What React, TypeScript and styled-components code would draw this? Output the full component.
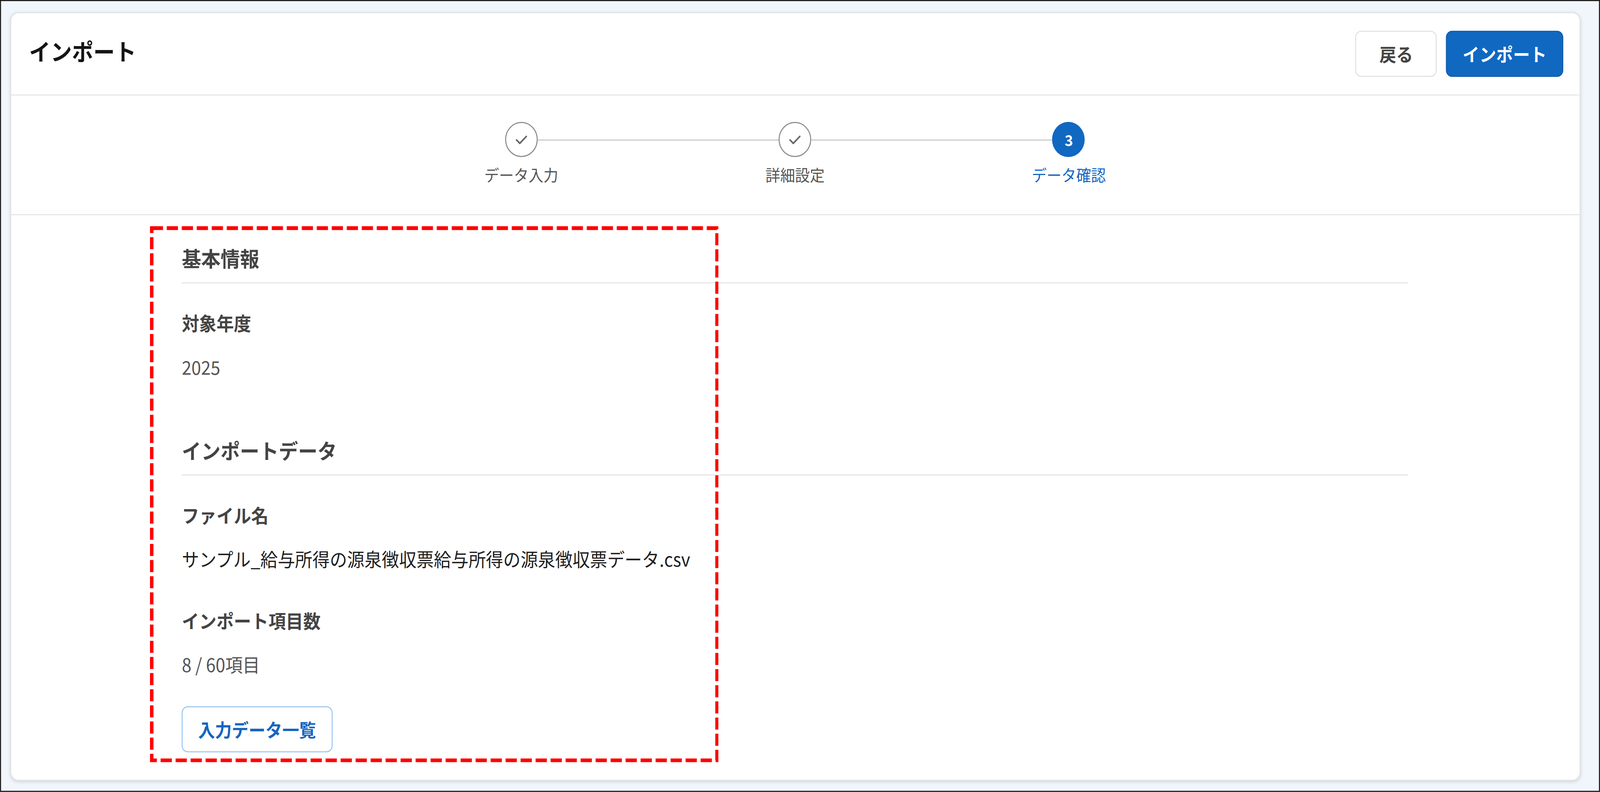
import React, { useEffect, useState } from "react";
import styled, { createGlobalStyle, css } from "styled-components";

const BASE_WIDTH = 1568;
const BASE_HEIGHT = 721.1;

const GlobalStyle = createGlobalStyle`
  html, body {
    margin: 0;
    padding: 0;
    background: #f1f5fc;
  }
  body {
    font-family: "Noto Sans CJK JP", "Noto Sans", sans-serif;
  }
  * {
    box-sizing: border-box;
  }
`;

// fills the browser window, the page inside is stretched to it
const Screen = styled.div`
  width: 100vw;
  height: 100vh;
  overflow: hidden;
  background: #f1f5fc;
`;

// the reference is a 1568px wide screen shot scaled up, the scale is set at runtime
const Page = styled.div`
  position: relative;
  width: 1568px;
  height: 721.1px;
  transform-origin: 0 0;
  border: 1px solid #1b1b1b;
  background: #f1f5fc;
  padding: 10px 18.2px 9.6px 8.5px;
`;

const Card = styled.div`
  height: 100%;
  display: flex;
  flex-direction: column;
  background: #fff;
  border: 1px solid #e2e2e2;
  border-radius: 8px;
  box-shadow: 0 1px 3px rgba(0, 0, 0, 0.12);
  overflow: hidden;
`;

const Header = styled.div`
  display: flex;
  justify-content: space-between;
  align-items: flex-start;
  padding: 16px 16px 16px 18px;
  border-bottom: 1px solid #e6e6e6;
`;

const Title = styled.h1`
  margin: 0;
  font-size: 21px;
  line-height: 36px;
  font-weight: 700;
  color: #151515;
`;

const Actions = styled.div`
  display: flex;
  gap: 9px;
`;

const Button = styled.button<{ $variant: "plain" | "primary" | "outline" }>`
  height: 42px;
  padding: 0 15px;
  border-radius: 6px;
  font-family: inherit;
  font-size: 16.5px;
  font-weight: 700;
  cursor: pointer;
  ${props =>
    props.$variant === "primary"
      ? css`
          background: #1168c1;
          border: 1px solid #0d5cab;
          color: #fff;
        `
      : props.$variant === "outline"
      ? css`
          background: #fff;
          border: 1px solid #9cc8f3;
          color: #1565c0;
        `
      : css`
          min-width: 80px;
          background: #fff;
          border: 1px solid #e2e2e2;
          color: #444;
        `}
`;

const StepperArea = styled.div`
  padding: 24px 0 26px;
  border-bottom: 1px solid #e6e6e6;
`;

const Stepper = styled.div`
  display: flex;
  width: 805px;
  margin: 0 auto;
`;

const StepItem = styled.div`
  position: relative;
  flex: 1;
  display: flex;
  flex-direction: column;
  align-items: center;
`;

const Connector = styled.span`
  position: absolute;
  top: 15.5px;
  left: calc(-50% + 16px);
  right: calc(50% + 16px);
  border-top: 1px solid #c9c9c9;
`;

const StepCircle = styled.div<{ $active: boolean }>`
  width: 32px;
  height: 32px;
  border-radius: 50%;
  display: flex;
  align-items: center;
  justify-content: center;
  font-size: 14px;
  font-weight: 700;
  ${props =>
    props.$active
      ? css`
          background: #1168c1;
          color: #fff;
        `
      : css`
          border: 1px solid #8a8a8a;
          background: #fff;
          color: #666;
        `}
`;

const StepLabel = styled.div<{ $active: boolean }>`
  margin-top: 6px;
  font-size: 14.5px;
  line-height: 20px;
  color: ${props => (props.$active ? "#1565c0" : "#555")};
`;

const Body = styled.div`
  flex: 1;
  padding: 25px 0 24px;
`;

const Content = styled.div`
  width: 1202px;
  margin: 0 auto;
`;

const Section = styled.section`
  & + & {
    margin-top: 50px;
  }
`;

const SectionTitle = styled.h2`
  margin: 0 0 24px;
  padding-bottom: 8px;
  border-bottom: 1px solid #e5e5e5;
  font-size: 19px;
  line-height: 28px;
  font-weight: 700;
  color: #444;
`;

const Field = styled.div`
  & + & {
    margin-top: 32px;
  }
`;

const FieldLabel = styled.div`
  font-size: 17px;
  line-height: 24px;
  font-weight: 700;
  color: #444;
`;

const FieldValue = styled.div<{ $strong?: boolean }>`
  margin-top: 16px;
  font-size: 17px;
  line-height: 24px;
  color: ${props => (props.$strong ? "#1f1f1f" : "#555")};
`;

const ListButtonRow = styled.div`
  margin-top: 26px;
`;

const Highlight = styled.svg`
  position: absolute;
  left: 146px;
  top: 205px;
  width: 557.4px;
  height: 488px;
  pointer-events: none;
`;

const CheckIcon = () => (
  <svg width="12" height="9" viewBox="0 0 12 9">
    <polyline
      points="1.2,4.4 4.4,7.6 10.8,1.2"
      fill="none"
      stroke="#666"
      strokeWidth="1.5"
      strokeLinecap="round"
      strokeLinejoin="round"
    />
  </svg>
);

const steps = [
  { label: "データ入力", done: true },
  { label: "詳細設定", done: true },
  { label: "データ確認", done: false },
];

const getScale = () => {
  const root = document.documentElement;
  return {
    x: (root.clientWidth || window.innerWidth) / BASE_WIDTH,
    y: (root.clientHeight || window.innerHeight) / BASE_HEIGHT,
  };
};

const App = () => {
  const [scale, setScale] = useState(getScale);

  useEffect(() => {
    const onResize = () => setScale(getScale());
    window.addEventListener("resize", onResize);
    return () => window.removeEventListener("resize", onResize);
  }, []);

  return (
    <Screen>
      <GlobalStyle />
      <Page style={{ transform: `scale(${scale.x}, ${scale.y})` }}>
        <Card>
          <Header>
            <Title>インポート</Title>
            <Actions>
              <Button $variant="plain">戻る</Button>
              <Button $variant="primary">インポート</Button>
            </Actions>
          </Header>

          <StepperArea>
            <Stepper>
              {steps.map((step, index) => (
                <StepItem key={step.label}>
                  {index > 0 && <Connector />}
                  <StepCircle $active={!step.done}>
                    {step.done ? <CheckIcon /> : index + 1}
                  </StepCircle>
                  <StepLabel $active={!step.done}>{step.label}</StepLabel>
                </StepItem>
              ))}
            </Stepper>
          </StepperArea>

          <Body>
            <Content>
              <Section>
                <SectionTitle>基本情報</SectionTitle>
                <Field>
                  <FieldLabel>対象年度</FieldLabel>
                  <FieldValue>2025</FieldValue>
                </Field>
              </Section>

              <Section>
                <SectionTitle>インポートデータ</SectionTitle>
                <Field>
                  <FieldLabel>ファイル名</FieldLabel>
                  <FieldValue $strong>
                    サンプル_給与所得の源泉徴収票給与所得の源泉徴収票データ.csv
                  </FieldValue>
                </Field>
                <Field>
                  <FieldLabel>インポート項目数</FieldLabel>
                  <FieldValue>8 / 60項目</FieldValue>
                </Field>
                <ListButtonRow>
                  <Button $variant="outline">入力データ一覧</Button>
                </ListButtonRow>
              </Section>
            </Content>
          </Body>
        </Card>

        {/* 注釈の赤い破線枠 */}
        <Highlight viewBox="0 0 557.4 488">
          <rect
            x="1.7"
            y="1.7"
            width="554"
            height="484.6"
            fill="none"
            stroke="#ff0000"
            strokeWidth="3.4"
            strokeDasharray="11 3.7"
          />
        </Highlight>
      </Page>
    </Screen>
  );
};

export default App;
